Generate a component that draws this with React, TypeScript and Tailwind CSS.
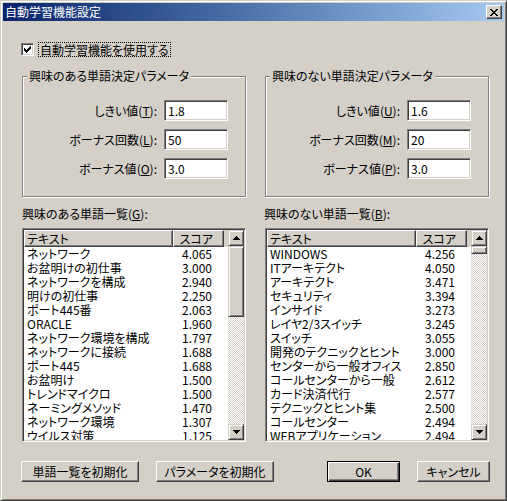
import React from "react";

const leftRows: [string, string][] = [
  ["ネットワーク", "4.065"],
  ["お盆明けの初仕事", "3.000"],
  ["ネットワークを構成", "2.940"],
  ["明けの初仕事", "2.250"],
  ["ポート445番", "2.063"],
  ["ORACLE", "1.960"],
  ["ネットワーク環境を構成", "1.797"],
  ["ネットワークに接続", "1.688"],
  ["ポート445", "1.688"],
  ["お盆明け", "1.500"],
  ["トレンドマイクロ", "1.500"],
  ["ネーミングメソッド", "1.470"],
  ["ネットワーク環境", "1.307"],
  ["ウイルス対策", "1.125"],
];

const rightRows: [string, string][] = [
  ["WINDOWS", "4.256"],
  ["ITアーキテクト", "4.050"],
  ["アーキテクト", "3.471"],
  ["セキュリティ", "3.394"],
  ["インサイド", "3.273"],
  ["レイヤ2/3スイッチ", "3.245"],
  ["スイッチ", "3.055"],
  ["開発のテクニックとヒント", "3.000"],
  ["センターから一般オフィス", "2.850"],
  ["コールセンターから一般", "2.612"],
  ["カード決済代行", "2.577"],
  ["テクニックとヒント集", "2.500"],
  ["コールセンター", "2.494"],
  ["WEBアプリケーション", "2.494"],
];

function Mn({ pre, k }: { pre: string; k: string }) {
  return (
    <span className="whitespace-nowrap">
      {pre}(<span className="underline underline-offset-[1px]">{k}</span>):
    </span>
  );
}

function TextBox({ value }: { value: string }) {
  return (
    <div className="w-[64px] h-[21px] bg-white border border-t-[#808080] border-l-[#808080] border-r-white border-b-white shadow-[inset_1px_1px_0_#404040,inset_-1px_-1px_0_#d4d0c8] pl-[3px] flex items-center">
      {value}
    </div>
  );
}

function Group({
  title,
  rows,
}: {
  title: string;
  rows: { pre: string; k: string; v: string }[];
}) {
  return (
    <div className="relative w-[224px] h-[121px] border border-[#808080] shadow-[inset_1px_1px_0_#fff,1px_1px_0_#fff]">
      <div className="absolute left-[4px] top-[-8px] px-[2px] bg-[#d4d0c8] leading-[14px] whitespace-nowrap">
        {title}
      </div>
      <div className="flex flex-col items-end gap-[8px] pt-[23px] pr-[17px]">
        {rows.map((r) => (
          <div key={r.k} className="flex items-center gap-[7px]">
            <Mn pre={r.pre} k={r.k} />
            <TextBox value={r.v} />
          </div>
        ))}
      </div>
    </div>
  );
}

function Arrow({ up }: { up: boolean }) {
  return (
    <svg width="7" height="4" viewBox="0 0 7 4" shapeRendering="crispEdges">
      {up ? (
        <polygon points="3.5,0 7,4 0,4" fill="#000" />
      ) : (
        <polygon points="0,0 7,0 3.5,4" fill="#000" />
      )}
    </svg>
  );
}

const raisedSB =
  "bg-[#d4d0c8] border border-t-[#d4d0c8] border-l-[#d4d0c8] border-r-[#404040] border-b-[#404040] shadow-[inset_1px_1px_0_#fff,inset_-1px_-1px_0_#808080]";

function ListBox({ rows, thumb }: { rows: [string, string][]; thumb: number }) {
  return (
    <div className="w-[224px] h-[214px] flex border border-t-[#808080] border-l-[#808080] border-r-white border-b-white shadow-[inset_1px_1px_0_#404040,inset_-1px_-1px_0_#d4d0c8] p-[1px]">
      <div className="flex-1 flex flex-col bg-white overflow-hidden">
        <div className="h-[17px] flex shrink-0 bg-[#d4d0c8]">
          <div className="w-[149px] h-full border border-t-white border-l-white border-r-[#404040] border-b-[#404040] shadow-[inset_-1px_-1px_0_#808080] pl-[2px] flex items-center">
            テキスト
          </div>
          <div className="w-[51px] h-full border border-t-white border-l-white border-r-[#404040] border-b-[#404040] shadow-[inset_-1px_-1px_0_#808080] pr-[10px] flex items-center justify-end">
            スコア
          </div>
          <div className="flex-1" />
        </div>
        {rows.map(([t, s], i) => (
          <div key={i} className="h-[14px] shrink-0 flex items-center leading-[14px]">
            <div className="w-[149px] pl-[3px] whitespace-nowrap">{t}</div>
            <div className="w-[51px] pr-[12px] text-right">{s}</div>
          </div>
        ))}
      </div>
      <div className="w-[16px] h-full flex flex-col">
        <div className={`h-[16px] shrink-0 flex items-center justify-center ${raisedSB}`}>
          <Arrow up />
        </div>
        <div className="flex-1 bg-[image:repeating-conic-gradient(#d4d0c8_0_25%,#ffffff_0_50%)] bg-[length:2px_2px]">
          <div className={raisedSB} style={{ height: thumb }} />
        </div>
        <div className={`h-[16px] shrink-0 flex items-center justify-center ${raisedSB}`}>
          <Arrow up={false} />
        </div>
      </div>
    </div>
  );
}

const pushBtn =
  "h-[21px] bg-[#d4d0c8] border border-t-white border-l-white border-r-[#404040] border-b-[#404040] shadow-[inset_-1px_-1px_0_#808080] flex items-center justify-center whitespace-nowrap";

export default function App() {
  return (
    <div className="w-[507px] h-[501px] bg-[#d4d0c8] border border-t-[#d4d0c8] border-l-[#d4d0c8] border-r-[#404040] border-b-[#404040] shadow-[inset_1px_1px_0_#fff,inset_-1px_-1px_0_#808080] p-[2px] flex flex-col text-[12px] leading-[14px] text-black font-['Noto_Sans_CJK_JP','Noto_Sans',sans-serif] [font-feature-settings:'palt']">
      {/* Title bar */}
      <div className="h-[18px] shrink-0 bg-linear-to-r from-[#0a246a] to-[#a6caf0] flex items-center justify-between pl-[2px] pr-[2px]">
        <span className="text-white leading-[14px]">自動学習機能設定</span>
        <div className="w-[16px] h-[14px] bg-[#d4d0c8] border border-t-white border-l-white border-r-[#404040] border-b-[#404040] shadow-[inset_-1px_-1px_0_#808080] flex items-center justify-center">
          <svg width="8" height="7" viewBox="0 0 8 7" shapeRendering="crispEdges">
            <path d="M0 0h2l2 2.5L6 0h2L5 3.5 8 7H6L4 4.5 2 7H0l3-3.5z" fill="#000" />
          </svg>
        </div>
      </div>

      <div className="flex flex-col pl-[18px]">
        {/* Checkbox */}
        <div className="mt-[21px] h-[15px] flex items-center">
          <div className="w-[13px] h-[13px] bg-white border border-t-[#808080] border-l-[#808080] border-r-white border-b-white shadow-[inset_1px_1px_0_#404040,inset_-1px_-1px_0_#d4d0c8] flex items-center justify-center">
            <svg width="7" height="7" viewBox="0 0 7 7" shapeRendering="crispEdges">
              <path d="M0 2h1v1h1v1h1V3h1V2h1V1h1V0h1v3H6v1H5v1H4v1H3v1H2V6H1V5H0z" fill="#000" />
            </svg>
          </div>
          <div className="ml-[4px] h-[15px] px-[1px] border border-dotted border-black flex items-center">
            自動学習機能を使用する
          </div>
        </div>

        {/* Groups */}
        <div className="mt-[19px] ml-[1px] flex gap-[19px]">
          <Group
            title="興味のある単語決定パラメータ"
            rows={[
              { pre: "しきい値", k: "T", v: "1.8" },
              { pre: "ボーナス回数", k: "L", v: "50" },
              { pre: "ボーナス値", k: "O", v: "3.0" },
            ]}
          />
          <Group
            title="興味のない単語決定パラメータ"
            rows={[
              { pre: "しきい値", k: "U", v: "1.6" },
              { pre: "ボーナス回数", k: "M", v: "20" },
              { pre: "ボーナス値", k: "P", v: "3.0" },
            ]}
          />
        </div>

        {/* Lists */}
        <div className="mt-[10px] ml-[1px] flex gap-[19px]">
          <div className="flex flex-col w-[224px]">
            <div className="h-[14px]">
              <Mn pre="興味のある単語一覧" k="G" />
            </div>
            <div className="mt-[7px]">
              <ListBox rows={leftRows} thumb={71} />
            </div>
          </div>
          <div className="flex flex-col w-[224px]">
            <div className="h-[14px] -ml-[1px]">
              <Mn pre="興味のない単語一覧" k="B" />
            </div>
            <div className="mt-[7px]">
              <ListBox rows={rightRows} thumb={8} />
            </div>
          </div>
        </div>

        {/* Buttons */}
        <div className="mt-[19px] flex items-center">
          <div className={`w-[118px] ${pushBtn}`}>単語一覧を初期化</div>
          <div className={`ml-[17px] w-[118px] ${pushBtn}`}>パラメータを初期化</div>
          <div className="ml-[53px] w-[73px] h-[21px] bg-[#d4d0c8] border border-black shadow-[inset_1px_1px_0_#fff,inset_-1px_-1px_0_#404040,inset_-2px_-2px_0_#808080] flex items-center justify-center">
            OK
          </div>
          <div className={`ml-[17px] w-[73px] ${pushBtn}`}>キャンセル</div>
        </div>
      </div>
    </div>
  );
}
